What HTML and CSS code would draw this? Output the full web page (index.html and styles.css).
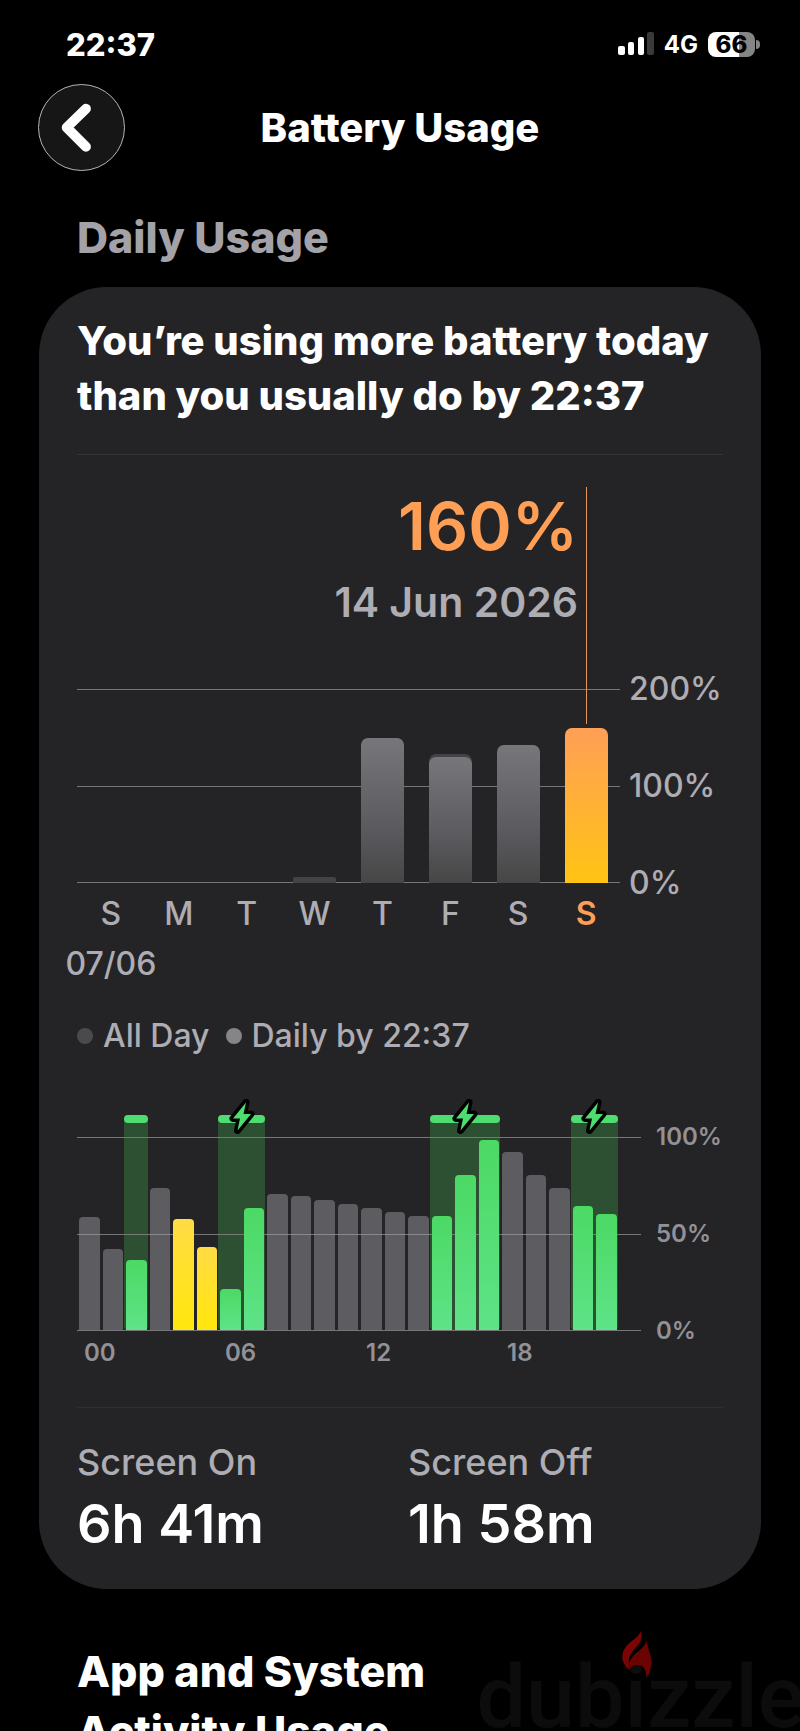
FILE: index.html
```html
<!DOCTYPE html>
<html lang="en">
<head>
<meta charset="utf-8">
<meta name="viewport" content="width=device-width, initial-scale=1">
<title>Battery Usage</title>
<link rel="stylesheet" href="styles.css">
</head>
<body>
<svg class="defs" aria-hidden="true">
  <symbol id="bolt" viewBox="0 0 28 38">
    <path d="M18 4.5 5 20.5h7L9.500 32.500 23 16h-7.500z" fill="#4fdc70" stroke="#000" stroke-width="7" stroke-linejoin="round" paint-order="stroke"/>
  </symbol>
</svg>
<div class="screen">
  <div class="status">
    <span class="status-time">22:37</span>
    <div class="status-icons">
      <svg class="signal" viewBox="0 0 36 24" aria-label="Signal">
        <rect x="0" y="14" width="7" height="9" rx="2" fill="#fff"/>
        <rect x="10" y="10" width="6" height="13" rx="2" fill="#fff"/>
        <rect x="20" y="5" width="6" height="18" rx="2" fill="#fff"/>
        <rect x="29" y="0" width="7" height="23" rx="2" fill="#3a3a3a"/>
      </svg>
      <span class="network">4G</span>
      <div class="battery"><span class="battery-level">66</span><span class="battery-cap"></span></div>
    </div>
  </div>

  <header class="nav">
    <button class="back" type="button" aria-label="Back">
      <svg viewBox="0 0 86 86" aria-hidden="true"><path d="M47.500 24 28 43 47.500 62.500" fill="none" stroke="#fff" stroke-width="10" stroke-linecap="round" stroke-linejoin="round"/></svg>
    </button>
    <h1 class="nav-title">Battery Usage</h1>
  </header>

  <main>
    <h2 class="section-title">Daily Usage</h2>
    <section class="card">
      <p class="summary">You’re using more battery today than you usually do by 22:37</p>

      <div class="daily">
        <div class="readout">
          <div class="readout-value">160%</div>
          <div class="readout-date">14 Jun 2026</div>
        </div>
        <div class="plot daily-plot">
          <div class="grid"><i></i><i></i><i></i></div>
          <div class="bars">
            <div class="day"></div>
            <div class="day"></div>
            <div class="day"></div>
            <div class="day"><div class="all-day flat" style="height:6%"></div></div>
            <div class="day"><div class="by-now" style="height:149%"></div></div>
            <div class="day"><div class="all-day" style="height:133%"><div class="by-now" style="height:98%"></div></div></div>
            <div class="day"><div class="by-now" style="height:142%"></div></div>
            <div class="day"><div class="today" style="height:160%"></div><span class="marker"></span></div>
          </div>
        </div>
        <div class="axis daily-axis"><span>200%</span><span>100%</span><span>0%</span></div>
        <div class="day-labels">
          <span>S<br>07/06</span><span>M</span><span>T</span><span>W</span><span>T</span><span>F</span><span>S</span><span class="selected">S</span>
        </div>
      </div>

      <ul class="legend">
        <li><span class="dot dot-all"></span>All Day</li>
        <li><span class="dot dot-now"></span>Daily by 22:37</li>
      </ul>

      <div class="hourly">
        <div class="plot hourly-plot">
          <div class="bands">
            <div class="band b1"></div>
            <div class="band b2"><svg class="bolt"><use href="#bolt"/></svg></div>
            <div class="band b3"><svg class="bolt"><use href="#bolt"/></svg></div>
            <div class="band b4"><svg class="bolt"><use href="#bolt"/></svg></div>
          </div>
          <div class="grid"><i></i><i></i><i></i></div>
          <div class="bars">
            <div class="hour" style="height:58%"></div>
            <div class="hour" style="height:42%"></div>
            <div class="hour charging" style="height:36%"></div>
            <div class="hour" style="height:73%"></div>
            <div class="hour saver" style="height:57%"></div>
            <div class="hour saver" style="height:43%"></div>
            <div class="hour charging" style="height:21%"></div>
            <div class="hour charging" style="height:63%"></div>
            <div class="hour" style="height:70%"></div>
            <div class="hour" style="height:69%"></div>
            <div class="hour" style="height:67%"></div>
            <div class="hour" style="height:65%"></div>
            <div class="hour" style="height:63%"></div>
            <div class="hour" style="height:61%"></div>
            <div class="hour" style="height:59%"></div>
            <div class="hour charging" style="height:59%"></div>
            <div class="hour charging" style="height:80%"></div>
            <div class="hour charging" style="height:98%"></div>
            <div class="hour" style="height:92%"></div>
            <div class="hour" style="height:80%"></div>
            <div class="hour" style="height:73%"></div>
            <div class="hour charging" style="height:64%"></div>
            <div class="hour charging" style="height:60%"></div>
          </div>
        </div>
        <div class="axis hourly-axis"><span>100%</span><span>50%</span><span>0%</span></div>
        <div class="hour-labels"><span>00</span><span>06</span><span>12</span><span>18</span></div>
      </div>

      <dl class="totals">
        <div><dt>Screen On</dt><dd>6h 41m</dd></div>
        <div><dt>Screen Off</dt><dd>1h 58m</dd></div>
      </dl>
    </section>
    <h2 class="next-title">App and System<br>Activity Usage</h2>
  </main>

  <div class="watermark">dubizzle
    <svg class="flame" viewBox="0 0 30 48" aria-hidden="true">
      <path d="M19 0c3 8-1 13-6 18-5 5-7 11-5 21C-1 32-1 22 5 15 10 9 17 7 19 0z" fill="#7c0404"/>
      <path d="M25 9c1 10 6 16 5 25-1 5-2 9-5 13 0-8-3-13-9-13-4 0-7 2-8 5-1-9 2-13 8-18 5-4 8-7 9-12z" fill="#6c0303"/>
    </svg>
  </div>
</div>
</body>
</html>
```
FILE: styles.css
```css
* { box-sizing: border-box; }

html, body { height: 100%; }

body {
  margin: 0;
  background: #000;
  color: #fff;
  font-family: Inter, "Liberation Sans", sans-serif;
}

h1, h2, p, ul, dl, dd { margin: 0; padding: 0; }

.defs { display: none; }

.screen {
  position: relative;
  height: 100vh;
  overflow: hidden;
}

/* Status bar */
.status {
  display: flex;
  justify-content: space-between;
  align-items: center;
  height: 84px;
  padding: 4px 40px 0 66px;
}

.status-time { font-size: 31px; font-weight: 800; }

.status-icons { display: flex; align-items: center; }

.signal { width: 36px; height: 24px; margin-right: 10px; }

.network { font-size: 24px; font-weight: 700; margin-right: 10px; }

.battery { display: flex; align-items: center; gap: 1px; }

.battery-level {
  width: 47px;
  border-radius: 8px;
  background: linear-gradient(90deg, #fff 66%, #858585 66%);
  color: #000;
  font-size: 24px;
  font-weight: 800;
  line-height: 25px;
  text-align: center;
}

.battery-cap {
  width: 4px;
  height: 9px;
  border-radius: 0 4px 4px 0;
  background: #858585;
}

/* Navigation */
.nav {
  display: grid;
  grid-template-columns: 88px 1fr 88px;
  align-items: center;
  padding: 0 38px;
}

.back {
  width: 87px;
  height: 87px;
  padding: 0;
  border: 1px solid #b4b4b4;
  border-radius: 50%;
  background: #161616;
}

.back svg { display: block; width: 100%; }

.nav-title {
  font-size: 40px;
  font-weight: 800;
  line-height: 48px;
  text-align: center;
}

.section-title {
  margin: 40px 77px 24px;
  color: #a3a2a8;
  font-size: 43px;
  font-weight: 800;
  line-height: 52px;
}

/* Card */
.card {
  margin: 0 39px;
  padding: 26px 38px 34px;
  border-radius: 68px;
  background: #242426;
}

.summary {
  padding-bottom: 31px;
  border-bottom: 1px solid #343437;
  font-size: 40px;
  font-weight: 800;
  line-height: 55px;
}

.plot { display: grid; }

.plot > * { grid-area: 1 / 1; }

.grid {
  display: flex;
  flex-direction: column;
  justify-content: space-between;
}

.grid i { height: 1px; background: #77777a; }

.bars { display: grid; align-items: end; }

.axis {
  display: flex;
  flex-direction: column;
  justify-content: space-between;
}

/* Daily chart */
.daily {
  display: grid;
  grid-template-columns: 1fr 103px;
  padding-top: 32px;
}

.readout {
  padding: 0 42px 62px 0;
  font-weight: 600;
  text-align: right;
}

.readout-value {
  margin-bottom: 12px;
  color: #ff9f56;
  font-size: 66px;
  line-height: 78px;
}

.readout-date {
  color: #aeadb3;
  font-size: 41px;
  line-height: 50px;
}

.daily-plot { grid-row: 2; height: 194px; }

.daily-plot .bars { grid-template-columns: repeat(8, 1fr); }

.day {
  position: relative;
  display: flex;
  align-items: flex-end;
  justify-content: center;
  height: 50%;
}

.all-day, .by-now, .today {
  width: 43px;
  border-radius: 7px 7px 0 0;
}

.all-day { display: flex; align-items: flex-end; background: #434346; }

.flat { border-radius: 2px 2px 0 0; }

.by-now { background: linear-gradient(#77767b, #5c5b60 60%, #464646); }

.today { background: linear-gradient(#ff9f56, #ffc414); }

.marker {
  position: absolute;
  top: -299px;
  bottom: calc(160% + 4px);
  width: 1px;
  background: #e8955a;
}

.daily-axis {
  grid-row: 2;
  margin: -20px 0;
  padding-left: 9px;
  color: #aeadb3;
  font-size: 32px;
  font-weight: 500;
  line-height: 40px;
}

.day-labels {
  grid-row: 3;
  display: grid;
  grid-template-columns: repeat(8, 1fr);
  justify-items: center;
  padding-top: 6px;
  color: #aeadb3;
  font-size: 32px;
  font-weight: 500;
  line-height: 50px;
  text-align: center;
}

.day-labels span { display: flex; flex-direction: column; align-items: center; width: 0; }

.day-labels .selected { color: #ff9f56; font-weight: 600; }

/* Legend */
.legend {
  display: flex;
  gap: 16px;
  margin: 27px 0 59px;
  list-style: none;
  color: #aeadb3;
  font-size: 32px;
  font-weight: 500;
  line-height: 40px;
}

.legend li { display: flex; align-items: center; gap: 10px; }

.dot { width: 16px; height: 16px; border-radius: 50%; }

.dot-all { background: #4a4a4c; }

.dot-now { background: #858587; }

/* Hourly chart */
.hourly {
  display: grid;
  grid-template-columns: 1fr 82px;
  padding-bottom: 39px;
  border-bottom: 1px solid #2f2f32;
}

.hourly-plot { height: 216px; }

.hourly-plot .grid, .hourly-plot .bars { margin-top: 22px; }

.bands, .hourly-plot .bars {
  display: grid;
  grid-template-columns: repeat(24, 1fr);
}

.bands { margin-bottom: 1px; }

.band {
  display: flex;
  justify-content: center;
  align-items: flex-start;
  grid-row: 1;
  border-radius: 4px;
  background: #2d5033;
}

.band::before {
  content: "";
  flex: 1;
  height: 8px;
  border-radius: 4px;
  background: #4fdc70;
}

.b1 { grid-column: 3; }
.b2 { grid-column: 7 / span 2; }
.b3 { grid-column: 16 / span 3; }
.b4 { grid-column: 22 / span 2; }

.bolt {
  position: absolute;
  width: 28px;
  height: 38px;
  margin-top: -17px;
}

.hour {
  margin: 0 1px 1px 2px;
  border-radius: 4px 4px 0 0;
  background: rgba(156, 155, 163, 0.47);
}

.charging { background: linear-gradient(#4cd964, #5ee388); }

.saver { background: linear-gradient(#ffdc45, #ffe70c); }

.hourly-axis {
  margin: 7px 0 -15px;
  padding-left: 15px;
  color: #929197;
  font-size: 24px;
  font-weight: 600;
  line-height: 30px;
}

.hour-labels {
  display: grid;
  grid-template-columns: repeat(4, 1fr);
  padding-top: 7px;
  color: #929197;
  font-size: 24px;
  font-weight: 600;
  line-height: 30px;
}

.hour-labels span { padding-left: 7px; }

/* Totals */
.totals {
  display: grid;
  grid-template-columns: 1fr 1fr;
  gap: 16px;
  padding-top: 32px;
}

dt {
  color: #aeadb3;
  font-size: 36px;
  font-weight: 500;
  line-height: 44px;
}

dd {
  margin-top: 9px;
  font-size: 54px;
  font-weight: 600;
  line-height: 62px;
}

.next-title {
  margin: 52px 77px 0;
  font-size: 43px;
  font-weight: 800;
  line-height: 60px;
}

/* Watermark */
.watermark {
  position: absolute;
  right: -5px;
  bottom: 0;
  height: 58px;
  color: #0c0c0d;
  font-family: Roboto, sans-serif;
  font-size: 88px;
  font-weight: 500;
  line-height: 48px;
}

.flame {
  position: absolute;
  top: -42px;
  left: 144px;
  width: 31px;
  height: 48px;
}
```
